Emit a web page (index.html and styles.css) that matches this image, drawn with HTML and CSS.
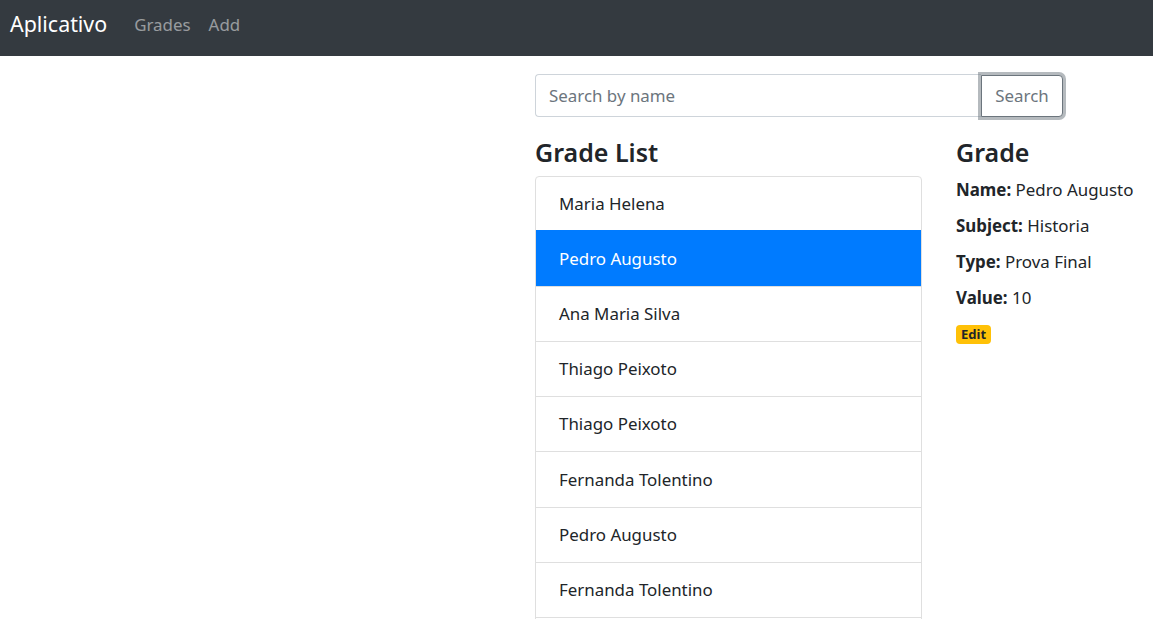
FILE: index.html
```html
<!DOCTYPE html>
<html lang="en">
<head>
<meta charset="utf-8">
<title>Aplicativo</title>
<link rel="stylesheet" href="styles.css">
</head>
<body>
<nav class="navbar">
  <a class="brand" href="#">Aplicativo</a>
  <div class="nav-links">
    <a class="nav-link" href="#">Grades</a>
    <a class="nav-link" href="#">Add</a>
  </div>
</nav>
<main class="list">
  <div class="input-group">
    <input class="form-control" type="text" placeholder="Search by name">
    <button class="btn-search" type="button">Search</button>
  </div>
  <div class="columns">
    <section class="list-col">
      <h4 class="title">Grade List</h4>
      <ul class="list-group">
        <li class="list-item">Maria Helena</li>
        <li class="list-item active">Pedro Augusto</li>
        <li class="list-item">Ana Maria Silva</li>
        <li class="list-item">Thiago Peixoto</li>
        <li class="list-item">Thiago Peixoto</li>
        <li class="list-item">Fernanda Tolentino</li>
        <li class="list-item">Pedro Augusto</li>
        <li class="list-item">Fernanda Tolentino</li>
        <li class="list-item"></li>
      </ul>
    </section>
    <section class="detail-col">
      <h4 class="title">Grade</h4>
      <div class="field"><strong>Name:</strong> Pedro Augusto</div>
      <div class="field"><strong>Subject:</strong> Historia</div>
      <div class="field"><strong>Type:</strong> Prova Final</div>
      <div class="field"><strong>Value:</strong> 10</div>
      <a class="badge" href="#">Edit</a>
    </section>
  </div>
</main>
</body>
</html>
```
FILE: styles.css
```css
html, body {
  margin: 0;
  padding: 0;
  overflow: hidden;
}
body {
  font-family: "Noto Sans", "Open Sans", sans-serif;
  font-size: 16.9px;
  line-height: 1.5;
  color: #212529;
  background: #fff;
}
.navbar {
  height: 56px;
  background: #343a40;
  display: flex;
  align-items: center;
  padding: 0 0 7px 10px;
  box-sizing: border-box;
}
.brand {
  color: #fff;
  text-decoration: none;
  font-size: 21.4px;
  margin-right: 27px;
}
.nav-links {
  display: flex;
  gap: 18px;
}
.nav-link {
  color: rgba(255, 255, 255, 0.5);
  text-decoration: none;
  font-size: 16.9px;
}
.list {
  padding-left: 535px;
  padding-top: 18px;
}
.input-group {
  display: flex;
  width: 528px;
  height: 43px;
  margin-bottom: 18px;
}
.form-control {
  flex: 1;
  min-width: 0;
  box-sizing: border-box;
  height: 43px;
  border: 1px solid #ced4da;
  border-right: none;
  border-radius: 4px 0 0 4px;
  padding: 0 13px;
  font: inherit;
  color: #495057;
  outline: none;
}
.form-control::placeholder {
  color: #6c757d;
}
.btn-search {
  width: 82px;
  box-sizing: border-box;
  height: 42px;
  margin-top: 1px;
  border: 1px solid #6c757d;
  border-radius: 0 4px 4px 0;
  background: #fff;
  color: #6c757d;
  font: inherit;
  padding: 0;
  box-shadow: 0 0 0 3px rgba(108, 117, 125, 0.5);
  position: relative;
}
.columns {
  display: flex;
  gap: 34px;
  align-items: flex-start;
}
.list-col {
  width: 387px;
}
.title {
  margin: 0 0 9px;
  padding-top: 2px;
  font-size: 25px;
  line-height: 30px;
  font-weight: 600;
}
.list-group {
  list-style: none;
  margin: 0;
  padding: 0;
  border: 1px solid #dfdfdf;
  border-radius: 4px;
}
.list-item {
  height: 55px;
  box-sizing: border-box;
  padding: 0 23px;
  display: flex;
  align-items: center;
  border-top: 1px solid #dfdfdf;
}
.list-item:first-child {
  border-top: none;
  height: 54px;
}
.list-item:nth-child(6) {
  height: 56px;
}
.list-item.active {
  background: #007bff;
  color: #fff;
  border-top-color: #007bff;
  height: 56px;
  margin-top: -1px;
}
.detail-col {
  flex: 1;
  white-space: nowrap;
}
.field {
  height: 26px;
  line-height: 26px;
  margin-bottom: 9px;
  padding-top: 1px;
}
.field strong {
  font-weight: 700;
}
.badge {
  display: inline-block;
  margin-top: 1px;
  background: #ffc107;
  color: #212529;
  font-size: 13px;
  font-weight: 700;
  line-height: 13px;
  padding: 3px 5px;
  height: 19px;
  box-sizing: border-box;
  border-radius: 4px;
  text-decoration: none;
}
```
